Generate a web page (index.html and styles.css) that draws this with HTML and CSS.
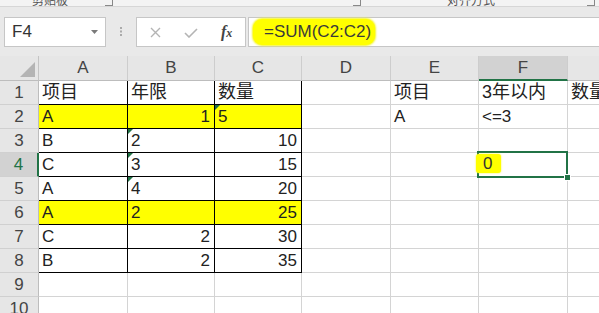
FILE: index.html
```html
<!DOCTYPE html>
<html lang="zh-CN">
<head>
<meta charset="utf-8">
<title>Excel</title>
<link rel="stylesheet" href="styles.css">
</head>
<body>
<div class="app">
  <div class="ribbon">
    <span class="rl rl-clip">剪贴板</span>
    <span class="launch l1"></span>
    <span class="launch l2"></span>
    <span class="rl rl-align">对齐方式</span>
    <span class="launch l3"></span>
  </div>
  <div class="fbar">
    <div class="namebox">
      <span class="nb-text">F4</span>
      <svg class="caret" width="7" height="4" viewBox="0 0 7 4"><polygon points="0,0 7,0 3.5,4" fill="#7a7a7a"/></svg>
    </div>
    <svg class="dots" width="2" height="9" viewBox="0 0 2 9"><rect x="0" y="0" width="2" height="2" fill="#aaa"/><rect x="0" y="3.5" width="2" height="2" fill="#aaa"/><rect x="0" y="7" width="2" height="2" fill="#aaa"/></svg>
    <div class="btns">
      <svg class="ic-x" width="11" height="11" viewBox="0 0 11 11"><path d="M1 1 L10 10 M10 1 L1 10" stroke="#b4b4b4" stroke-width="1.4" fill="none"/></svg>
      <svg class="ic-ok" width="14" height="10" viewBox="0 0 14 10"><path d="M1 5 L5 9 L13 1" stroke="#b4b4b4" stroke-width="1.6" fill="none"/></svg>
      <span class="fx"><i>f</i><i class="fx-x">x</i></span>
    </div>
    <div class="formula"><span class="hl">=SUM(C2:C2)</span></div>
  </div>
  <div class="sheet">
    <div class="h corner"><span class="tri-corner"></span></div>
    <div class="h col">A</div>
    <div class="h col">B</div>
    <div class="h col">C</div>
    <div class="h col">D</div>
    <div class="h col">E</div>
    <div class="h col colsel">F</div>
    <div class="h col"></div>

    <div class="h row">1</div>
    <div class="c t zh">项目</div>
    <div class="c t zh">年限</div>
    <div class="c t zh">数量</div>
    <div class="c"></div>
    <div class="c zh">项目</div>
    <div class="c zh">3年以内</div>
    <div class="c zh">数量</div>

    <div class="h row">2</div>
    <div class="c t y">A</div>
    <div class="c t y r">1</div>
    <div class="c t y warn">5</div>
    <div class="c"></div>
    <div class="c">A</div>
    <div class="c">&lt;=3</div>
    <div class="c"></div>

    <div class="h row">3</div>
    <div class="c t">B</div>
    <div class="c t warn">2</div>
    <div class="c t r">10</div>
    <div class="c"></div>
    <div class="c"></div>
    <div class="c"></div>
    <div class="c"></div>

    <div class="h row rowsel">4</div>
    <div class="c t">C</div>
    <div class="c t warn">3</div>
    <div class="c t r">15</div>
    <div class="c"></div>
    <div class="c"></div>
    <div class="c active"><span class="hl0">0</span><span class="sel"><span class="handle"></span></span></div>
    <div class="c"></div>

    <div class="h row">5</div>
    <div class="c t">A</div>
    <div class="c t warn">4</div>
    <div class="c t r">20</div>
    <div class="c"></div>
    <div class="c"></div>
    <div class="c"></div>
    <div class="c"></div>

    <div class="h row">6</div>
    <div class="c t y">A</div>
    <div class="c t y">2</div>
    <div class="c t y r">25</div>
    <div class="c"></div>
    <div class="c"></div>
    <div class="c"></div>
    <div class="c"></div>

    <div class="h row">7</div>
    <div class="c t">C</div>
    <div class="c t r">2</div>
    <div class="c t r">30</div>
    <div class="c"></div>
    <div class="c"></div>
    <div class="c"></div>
    <div class="c"></div>

    <div class="h row">8</div>
    <div class="c t">B</div>
    <div class="c t r">2</div>
    <div class="c t r">35</div>
    <div class="c"></div>
    <div class="c"></div>
    <div class="c"></div>
    <div class="c"></div>

    <div class="h row">9</div>
    <div class="c"></div>
    <div class="c"></div>
    <div class="c"></div>
    <div class="c"></div>
    <div class="c"></div>
    <div class="c"></div>
    <div class="c"></div>

    <div class="h row">10</div>
    <div class="c"></div>
    <div class="c"></div>
    <div class="c"></div>
    <div class="c"></div>
    <div class="c"></div>
    <div class="c"></div>
    <div class="c"></div>
  </div>
</div>
</body>
</html>
```
FILE: styles.css
```css
* { box-sizing: border-box; }
html, body { margin: 0; padding: 0; background: #fff; }
body { overflow: hidden; }
.app {
  width: 599px;
  height: 313px;
  overflow: hidden;
  font-family: "Liberation Sans", "Noto Sans CJK SC", sans-serif;
  color: #222;
}

/* ribbon remnants */
.ribbon {
  height: 6px;
  background: #f3f3f3;
  display: flex;
  align-items: flex-end;
  overflow: hidden;
}
.rl {
  flex: none;
  font-size: 12px;
  line-height: 12px;
  height: 12px;
  color: #555;
  font-family: "Noto Sans CJK SC", sans-serif;
}
.rl-clip { margin-left: 32px; }
.rl-align { margin-left: 86px; }
.launch {
  flex: none;
  width: 8px;
  height: 9px;
  border-right: 1px solid #888;
  border-bottom: 1px solid #888;
}
.l1 { margin-left: 37px; }
.l2 { margin-left: 240px; }
.l3 { margin-left: 92px; }

/* formula bar */
.fbar {
  height: 50px;
  border-top: 1px solid #d6d6d6;
  background: #e9e9e9;
  display: flex;
  align-items: flex-start;
  padding-top: 10px;
}
.namebox {
  flex: none;
  margin-left: 4px;
  width: 102px;
  height: 30px;
  background: #fff;
  border: 1px solid #c6c6c6;
  display: flex;
  align-items: center;
  justify-content: space-between;
  padding: 0 7px 0 7px;
}
.nb-text { font-size: 17px; color: #333; }
.caret { display: block; }
.dots { flex: none; margin: 10px 0 0 14px; display: block; }
.btns {
  flex: none;
  margin-left: 14px;
  width: 110px;
  height: 30px;
  background: #fff;
  border: 1px solid #c6c6c6;
  display: flex;
  align-items: center;
  padding-left: 13px;
}
.ic-x { display: block; margin-top: 1px; }
.ic-ok { display: block; margin-left: 23px; margin-top: 2px; }
.fx {
  margin-left: 23px;
  font-family: "Liberation Serif", serif;
  font-size: 16px;
  color: #444;
  font-weight: bold;
}
.fx-x { font-size: 12px; }
.formula {
  flex: 1;
  margin-left: 2px;
  margin-right: -2px;
  height: 30px;
  background: #fff;
  border: 1px solid #c6c6c6;
  display: flex;
  align-items: center;
  padding-left: 4px;
}
.hl {
  display: inline-block;
  background: #ffff00;
  box-shadow: 0 0 2px 1px #f6f62a;
  border-radius: 9px;
  height: 26px;
  line-height: 26px;
  padding: 0 4px 0 11px;
  font-size: 17px;
  color: #3a3a3a;
}

/* sheet grid */
.sheet {
  display: grid;
  grid-template-columns: 39px 89px 87px 87px 89px 88px 89px 89px;
  grid-template-rows: 25px repeat(10, 24px);
  width: max-content;
}
.h {
  background: #e6e6e6;
  color: #444;
  font-size: 17px;
  text-align: center;
  line-height: 24px;
}
.corner {
  border-right: 1px solid #c4c4c4;
  border-bottom: 1px solid #bdbdbd;
  display: flex;
  align-items: flex-end;
  justify-content: flex-end;
  padding: 0 3px 3px 0;
}
.tri-corner {
  width: 0;
  height: 0;
  border-left: 15px solid transparent;
  border-bottom: 15px solid #b4b4b4;
}
.col {
  border-right: 1px solid #cdcdcd;
  border-bottom: 1px solid #bdbdbd;
}
.colsel {
  background: #d2d2d2;
  border-bottom: 2px solid #217346;
}
.row {
  border-right: 1px solid #bdbdbd;
  border-bottom: 1px solid #d0d0d0;
  line-height: 23px;
}
.rowsel {
  background: #d2d2d2;
  border-right: 2px solid #217346;
  color: #217346;
}
.c {
  position: relative;
  background: #fff;
  border-right: 1px solid #d4d4d4;
  border-bottom: 1px solid #d4d4d4;
  font-size: 17px;
  line-height: 23px;
  padding: 0 4px 0 3px;
  white-space: nowrap;
}
.zh { font-size: 18px; }
.r { text-align: right; }
.y { background: #ffff00; }
.t {
  border-right-color: #000;
  border-bottom-color: #000;
}
.warn::before {
  content: "";
  position: absolute;
  left: 0;
  top: 0;
  border-top: 5px solid #217346;
  border-right: 5px solid transparent;
}
.active { overflow: visible; }
.hl0 {
  position: relative;
  z-index: 3;
  display: inline-block;
  margin-left: -6px;
  padding: 0 9px 0 7px;
  background: #ffff00;
  box-shadow: 0 0 2px #f6f62a;
  border-radius: 3px;
  line-height: 19px;
  vertical-align: top;
  margin-top: 1px;
  color: #333;
}
.sel {
  position: absolute;
  z-index: 2;
  left: -2px;
  top: -2px;
  right: -1px;
  bottom: -2px;
  border: 2px solid #217346;
}
.handle {
  position: absolute;
  right: -5px;
  bottom: -5px;
  width: 7px;
  height: 7px;
  background: #217346;
  border: 1px solid #fff;
}
```
